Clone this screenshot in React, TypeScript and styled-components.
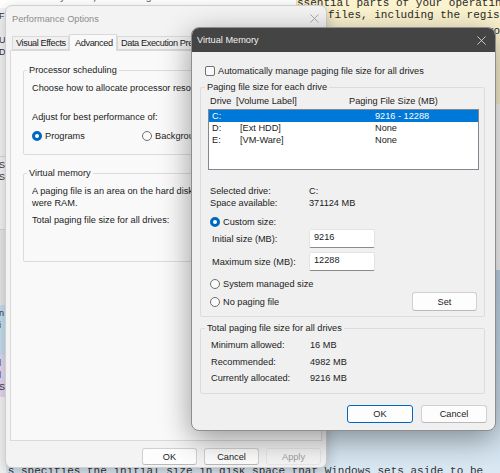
import React from "react";
import styled, { createGlobalStyle } from "styled-components";

const GlobalStyle = createGlobalStyle`
  html, body {
    margin: 0;
    padding: 0;
  }
  body {
    width: 500px;
    height: 473px;
    overflow: hidden;
    font-family: "Liberation Sans", Arial, sans-serif;
  }
  * {
    box-sizing: border-box;
  }
`;

const Desktop = styled.div`
  position: relative;
  width: 500px;
  height: 473px;
  overflow: hidden;
  background: #fff;
`;

/* ---------- page behind the dialogs ---------- */

const Page = styled.div`
  position: absolute;
  inset: 0;
  display: flex;
  flex-direction: column;
  font-family: "Liberation Mono", monospace;
  font-size: 11px;
  color: #2a2a2a;
`;

const TopBand = styled.div`
  display: flex;
  height: 104px;
`;

const TopLeft = styled.div`
  width: 296px;
  color: #666;
  line-height: 12px;
  margin-top: -9px;
  white-space: nowrap;
  overflow: hidden;
`;

const Note = styled.div`
  flex: 1;
  background: #fcf3cf;
  border-left: 1px solid #efe2a8;
  line-height: 12px;
  white-space: nowrap;
  overflow: hidden;
`;

const NoteLine = styled.div<{ $indent: number; $mt: number }>`
  padding-left: ${(p) => p.$indent}px;
  margin-top: ${(p) => p.$mt}px;
`;

const MidBand = styled.div`
  height: 166px;
  background: #fafafa;
`;

const BlueBand = styled.div`
  flex: 1;
  display: flex;
  flex-direction: column;
  justify-content: flex-end;
  background: linear-gradient(180deg, #bfd6e9 0%, #cfe1ef 60%, #d9e8f3 100%);
`;

const BottomLine = styled.div`
  text-indent: -12px;
  height: 9px;
  line-height: 14px;
  white-space: nowrap;
  overflow: hidden;
  color: #333;
`;

const SideWindow = styled.div`
  position: absolute;
  left: -60px;
  top: 8px;
  width: 66px;
  height: 465px;
  display: flex;
  flex-direction: column;
  background: #f3f3f3;
  font-size: 9px;
  color: #333;
`;

const SideBand = styled.div<{ $h: number; $bg?: string; $line?: boolean }>`
  height: ${(p) => p.$h}px;
  background: ${(p) => p.$bg ?? "transparent"};
  border-bottom: ${(p) => (p.$line ? "1px solid #d6d6d6" : "none")};
  padding: 2px 0 0 59px;
  line-height: 12px;
`;

/* ---------- shared win11 widgets ---------- */

const Text = styled.span`
  font-size: 9.2px;
  color: #1b1b1b;
  white-space: nowrap;
`;

const Group = styled.fieldset<{ $pl: number; $pb: number; $pt?: number; $mt: number }>`
  margin: ${(p) => p.$mt}px 0 0 0;
  padding: ${(p) => p.$pt ?? 0}px 7px ${(p) => p.$pb}px ${(p) => p.$pl}px;
  border: 1px solid #dcdcdc;
  border-radius: 2px;
  min-width: 0;
`;

const Legend = styled.legend<{ $ml: number }>`
  margin-left: ${(p) => p.$ml}px;
  padding: 0 2px;
  font-size: 9.2px;
  line-height: 11px;
  color: #1b1b1b;
`;

const Row = styled.div<{ $mt?: number; $ml?: number; $h?: number }>`
  display: flex;
  align-items: center;
  height: ${(p) => p.$h ?? 12}px;
  margin-top: ${(p) => p.$mt ?? 0}px;
  margin-left: ${(p) => p.$ml ?? 0}px;
`;

const Cell = styled.div<{ $w: number }>`
  width: ${(p) => p.$w}px;
  flex-shrink: 0;
  display: flex;
  align-items: center;
`;

const Spacer = styled.div`
  flex: 1;
`;

const RadioDot = styled.span<{ $on?: boolean }>`
  width: 10px;
  height: 10px;
  border-radius: 50%;
  flex-shrink: 0;
  margin-right: 3px;
  background: ${(p) => (p.$on ? "#fff" : "#fafafa")};
  border: ${(p) => (p.$on ? "3px solid #0067c0" : "1px solid #6f6f6f")};
`;

const CheckBox = styled.span`
  width: 10px;
  height: 10px;
  border-radius: 2px;
  border: 1px solid #6f6f6f;
  background: #fafafa;
  margin-right: 3px;
  flex-shrink: 0;
`;

const Button = styled.div<{ $w: number; $h?: number; $primary?: boolean; $disabled?: boolean }>`
  width: ${(p) => p.$w}px;
  height: ${(p) => p.$h ?? 18}px;
  display: flex;
  align-items: center;
  justify-content: center;
  border-radius: 3px;
  font-size: 9.2px;
  color: ${(p) => (p.$disabled ? "#9d9d9d" : "#1b1b1b")};
  background: ${(p) => (p.$disabled ? "#f5f5f5" : "#fdfdfd")};
  border: 1px solid ${(p) => (p.$primary ? "#0067c0" : p.$disabled ? "#e6e6e6" : "#d0d0d0")};
  border-bottom-color: ${(p) => (p.$primary ? "#0067c0" : p.$disabled ? "#e6e6e6" : "#b9b9b9")};
`;

const Close = ({ color, size }: { color: string; size: number }) => (
  <svg width={size} height={size} viewBox="0 0 10 10">
    <path d="M0.5 0.5 L9.5 9.5 M9.5 0.5 L0.5 9.5" stroke={color} strokeWidth="0.9" fill="none" />
  </svg>
);

/* ---------- performance options window ---------- */

const PerfWindow = styled.div`
  position: absolute;
  left: 5px;
  top: 5px;
  width: 322px;
  height: 463px;
  z-index: 1;
  background: #f3f3f3;
  border-radius: 7px;
  border: 1px solid #cfcfcf;
  box-shadow: 0 4px 14px rgba(0, 0, 0, 0.22);
  display: flex;
  flex-direction: column;
  overflow: hidden;
`;

const PerfTitle = styled.div`
  height: 25px;
  flex-shrink: 0;
  display: flex;
  align-items: center;
  justify-content: space-between;
  padding: 0 7px 0 6px;
  font-size: 9.2px;
  color: #8c8c8c;
`;

const TabStrip = styled.div`
  display: flex;
  align-items: flex-end;
  height: 19px;
  margin: 0 0 0 6px;
  position: relative;
  z-index: 1;
`;

const Tab = styled.div<{ $active?: boolean; $w: number }>`
  width: ${(p) => p.$w}px;
  height: ${(p) => (p.$active ? 17 : 14)}px;
  margin-bottom: ${(p) => (p.$active ? -1 : 0)}px;
  padding-left: ${(p) => (p.$active ? 5 : 3)}px;
  display: flex;
  align-items: center;
  font-size: 9.2px;
  letter-spacing: -0.4px;
  color: #1b1b1b;
  white-space: nowrap;
  overflow: hidden;
  background: ${(p) => (p.$active ? "#f9f9f9" : "#f0f0f0")};
  border: 1px solid #d9d9d9;
  border-bottom: ${(p) => (p.$active ? "none" : "1px solid #d9d9d9")};
`;

const TabPanel = styled.div`
  height: 391px;
  margin: 0 4px;
  background: #f9f9f9;
  border: 1px solid #d9d9d9;
  padding: 14px 13px 0 12px;
  display: flex;
  flex-direction: column;
`;

const PerfButtons = styled.div`
  display: flex;
  justify-content: flex-end;
  gap: 7px;
  margin: 7px 5px 0 0;
`;

/* ---------- virtual memory dialog ---------- */

const VmDialog = styled.div`
  position: absolute;
  left: 191px;
  top: 27px;
  width: 305px;
  height: 404px;
  z-index: 2;
  background: #f0f0f0;
  border-radius: 8px;
  border: 1px solid #8e8e8e;
  box-shadow: 0 8px 30px rgba(0, 0, 0, 0.4);
  overflow: hidden;
  display: flex;
  flex-direction: column;
`;

const VmTitle = styled.div`
  height: 24px;
  flex-shrink: 0;
  display: flex;
  align-items: center;
  justify-content: space-between;
  padding: 0 9px 0 5px;
  background: #444444;
  font-size: 9.2px;
  color: #f2f2f2;
`;

const VmBody = styled.div`
  display: flex;
  flex-direction: column;
  padding: 13px 10px 0 8px;
`;

const ListBox = styled.div`
  margin: 3px -2px 0 0;
  height: 61px;
  background: #fff;
  border: 1px solid #828790;
  display: flex;
  flex-direction: column;
`;

const ListItem = styled.div<{ $selected?: boolean }>`
  display: flex;
  align-items: center;
  height: 12px;
  padding-left: 3px;
  background: ${(p) => (p.$selected ? "#0078d7" : "transparent")};
  span {
    color: ${(p) => (p.$selected ? "#fff" : "#1b1b1b")};
  }
`;

const Field = styled.div`
  width: 66px;
  height: 19px;
  background: #fff;
  border: 1px solid #e3e3e3;
  border-bottom: 1px solid #8a8a8a;
  border-radius: 2px;
  padding: 2px 0 0 4px;
  font-size: 9.2px;
  color: #1b1b1b;
`;

const VmButtons = styled.div`
  display: flex;
  justify-content: flex-end;
  gap: 8px;
  margin: 11px -2px 0 0;
`;

const drives = [
  { d: "C:", label: "", size: "9216 - 12288", selected: true },
  { d: "D:", label: "[Ext HDD]", size: "None" },
  { d: "E:", label: "[VM-Ware]", size: "None" },
];

const totals = [
  ["Minimum allowed:", "16 MB"],
  ["Recommended:", "4982 MB"],
  ["Currently allocated:", "9216 MB"],
];

export default function App() {
  return (
    <Desktop>
      <GlobalStyle />
      <Page>
        <TopBand>
          <TopLeft>for the system, although the actual size is based on</TopLeft>
          <Note>
            <NoteLine $indent={0} $mt={-3}>ssential parts of your operating</NoteLine>
            <NoteLine $indent={31} $mt={0}>files, including the registry</NoteLine>
            <NoteLine $indent={190} $mt={4}>your</NoteLine>
          </Note>
        </TopBand>
        <MidBand />
        <BlueBand>
          <BottomLine>This specifies the initial size in disk space that Windows sets aside to be</BottomLine>
        </BlueBand>
      </Page>

      <SideWindow>
        <SideBand $h={24}>F</SideBand>
        <SideBand $h={125} $line>U<br />D</SideBand>
        <SideBand $h={73} $line>S<br />S</SideBand>
        <SideBand $h={75} $bg="#e6e6e6" />
        <SideBand $h={50} $bg="#c6dcec">n<br />i</SideBand>
        <SideBand $h={42} $bg="#e4d6ef">l<br />l<br />S</SideBand>
      </SideWindow>

      <PerfWindow>
        <PerfTitle>
          <span>Performance Options</span>
          <Close color="#9a9a9a" size={9} />
        </PerfTitle>
        <TabStrip>
          <Tab $w={57}>Visual Effects</Tab>
          <Tab $w={48} $active>Advanced</Tab>
          <Tab $w={120}>Data Execution Prevention</Tab>
        </TabStrip>
        <TabPanel>
          <Group $mt={0} $pl={8} $pb={12}>
            <Legend $ml={-5}>Processor scheduling</Legend>
            <Row $mt={6}>
              <Text>Choose how to allocate processor resources.</Text>
            </Row>
            <Row $mt={17}>
              <Text>Adjust for best performance of:</Text>
            </Row>
            <Row $mt={7}>
              <Cell $w={110}>
                <RadioDot $on />
                <Text>Programs</Text>
              </Cell>
              <RadioDot />
              <Text>Background services</Text>
            </Row>
          </Group>
          <Group $mt={13} $pl={8} $pb={35}>
            <Legend $ml={-5}>Virtual memory</Legend>
            <Row $mt={6}>
              <Text>A paging file is an area on the hard disk that Windows uses as if it</Text>
            </Row>
            <Row>
              <Text>were RAM.</Text>
            </Row>
            <Row $mt={5}>
              <Text>Total paging file size for all drives:</Text>
            </Row>
          </Group>
        </TabPanel>
        <PerfButtons>
          <Button $w={55} $h={17}>OK</Button>
          <Button $w={55} $h={17}>Cancel</Button>
          <Button $w={55} $h={17} $disabled>Apply</Button>
        </PerfButtons>
      </PerfWindow>

      <VmDialog>
        <VmTitle>
          <span>Virtual Memory</span>
          <Close color="#e8e8e8" size={9} />
        </VmTitle>
        <VmBody>
          <Row $ml={5}>
            <CheckBox />
            <Text>Automatically manage paging file size for all drives</Text>
          </Row>
          <Group $mt={5} $pl={7} $pb={5} $pt={2}>
            <Legend $ml={-3}>Paging file size for each drive</Legend>
            <Row $ml={2} $h={11}>
              <Cell $w={26}>
                <Text>Drive</Text>
              </Cell>
              <Cell $w={113}>
                <Text>[Volume Label]</Text>
              </Cell>
              <Text>Paging File Size (MB)</Text>
            </Row>
            <ListBox>
              {drives.map((r) => (
                <ListItem key={r.d} $selected={r.selected}>
                  <Cell $w={28}>
                    <Text>{r.d}</Text>
                  </Cell>
                  <Cell $w={135}>
                    <Text>{r.label}</Text>
                  </Cell>
                  <Text>{r.size}</Text>
                </ListItem>
              ))}
            </ListBox>
            <Row $mt={15} $ml={2}>
              <Cell $w={99}>
                <Text>Selected drive:</Text>
              </Cell>
              <Text>C:</Text>
            </Row>
            <Row $ml={2}>
              <Cell $w={99}>
                <Text>Space available:</Text>
              </Cell>
              <Text>371124 MB</Text>
            </Row>
            <Row $mt={7} $ml={2}>
              <RadioDot $on />
              <Text>Custom size:</Text>
            </Row>
            <Row $mt={1} $ml={4} $h={19}>
              <Cell $w={97}>
                <Text>Initial size (MB):</Text>
              </Cell>
              <Field>9216</Field>
            </Row>
            <Row $mt={4} $ml={4} $h={19}>
              <Cell $w={97}>
                <Text>Maximum size (MB):</Text>
              </Cell>
              <Field>12288</Field>
            </Row>
            <Row $mt={7} $ml={2}>
              <RadioDot />
              <Text>System managed size</Text>
            </Row>
            <Row $mt={2} $ml={2} $h={19}>
              <RadioDot />
              <Text>No paging file</Text>
              <Spacer />
              <Button $w={65} $h={19}>Set</Button>
            </Row>
          </Group>
          <Group $mt={6} $pl={10} $pb={6} $pt={3}>
            <Legend $ml={-6}>Total paging file size for all drives</Legend>
            {totals.map(([k, v]) => (
              <Row key={k} $h={16.5}>
                <Cell $w={99}>
                  <Text>{k}</Text>
                </Cell>
                <Text>{v}</Text>
              </Row>
            ))}
          </Group>
          <VmButtons>
            <Button $w={66} $primary>OK</Button>
            <Button $w={66}>Cancel</Button>
          </VmButtons>
        </VmBody>
      </VmDialog>
    </Desktop>
  );
}
